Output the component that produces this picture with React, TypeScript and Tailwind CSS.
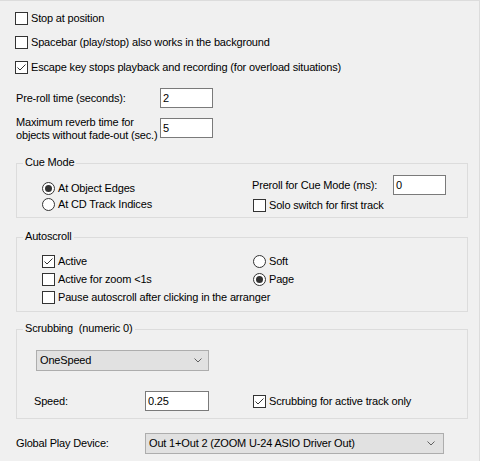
import type { PropsWithChildren } from 'react'

type ToggleProps = {
  label: string
  checked?: boolean
  className?: string
}

function CheckBox({ label, checked = false, className = '' }: ToggleProps) {
  return (
    <label className={`flex h-[15px] items-center gap-[3px] ${className}`}>
      <span className="flex h-[13px] w-[13px] shrink-0 items-center justify-center border border-[#333333] bg-white">
        {checked && (
          <svg width="11" height="11" viewBox="0 0 11 11" fill="none">
            <path d="M1.5 5.5 L4 8 L9.5 2.5" stroke="#333333" strokeWidth="1" />
          </svg>
        )}
      </span>
      <span className="whitespace-nowrap">{label}</span>
    </label>
  )
}

function Radio({ label, checked = false, className = '' }: ToggleProps) {
  return (
    <label className={`flex h-[15px] items-center gap-[3px] ${className}`}>
      <span className="flex h-[13px] w-[13px] shrink-0 items-center justify-center rounded-full border border-[#333333] bg-white">
        {checked && <span className="h-[7px] w-[7px] rounded-full bg-[#333333]" />}
      </span>
      <span className="whitespace-nowrap">{label}</span>
    </label>
  )
}

function TextBox({ value, className = '' }: { value: string; className?: string }) {
  return (
    <div className={`flex h-[20px] items-center border border-[#7a7a7a] bg-white pl-[2px] ${className}`}>
      {value}
    </div>
  )
}

function ComboBox({ value, className = '' }: { value: string; className?: string }) {
  return (
    <div className={`flex h-[21px] items-center justify-between border border-[#adadad] bg-[#e1e1e1] pl-[3px] pr-[6px] ${className}`}>
      <span className="whitespace-nowrap">{value}</span>
      <svg width="8" height="5" viewBox="0 0 8 5" fill="none">
        <path d="M0.5 0.5 L4 4 L7.5 0.5" stroke="#606060" strokeWidth="1" />
      </svg>
    </div>
  )
}

function Group({ title, className = '', children }: PropsWithChildren<{ title: string; className?: string }>) {
  return (
    <div className={`relative ml-[16px] w-[452px] border border-[#dcdcdc] ${className}`}>
      <span className="absolute -top-[8px] left-[6px] whitespace-pre bg-[#f0f0f0] px-[2px] leading-[13px]">
        {title}
      </span>
      {children}
    </div>
  )
}

export default function App() {
  return (
    <div className="h-[461px] w-[480px] overflow-hidden border-t border-r border-[#dcdcdc] bg-[#f0f0f0] font-['Liberation_Sans',Arial,sans-serif] text-[11px] leading-[13px] tracking-[-0.17px] text-black">
      {/* general playback switches */}
      <div className="flex flex-col pl-[15px] pt-[10px]">
        <CheckBox label="Stop at position" />
        <CheckBox className="mt-[9px]" label="Spacebar (play/stop) also works in the background" />
        <CheckBox className="mt-[10px]" checked label="Escape key stops playback and recording (for overload situations)" />
      </div>

      <div className="mt-[13px] flex items-center pl-[16px]">
        <span className="w-[144px] whitespace-nowrap">Pre-roll time (seconds):</span>
        <TextBox className="w-[53px]" value="2" />
      </div>

      <div className="mt-[8px] flex items-start pl-[16px]">
        <span className="w-[144px] whitespace-nowrap">
          Maximum reverb time for
          <br />
          objects without fade-out (sec.)
        </span>
        <TextBox className="mt-[2px] w-[53px]" value="5" />
      </div>

      <Group title="Cue Mode" className="mt-[21px] h-[55px]">
        <div className="flex">
          <div className="flex w-[235px] flex-col gap-[1px] pl-[25px] pt-[17px]">
            <Radio checked label="At Object Edges" />
            <Radio label="At CD Track Indices" />
          </div>
          <div className="flex flex-col pt-[11px]">
            <div className="flex items-center">
              <span className="w-[141px] whitespace-nowrap">Preroll for Cue Mode (ms):</span>
              <TextBox className="w-[53px]" value="0" />
            </div>
            <CheckBox className="ml-[1px] mt-[3px]" label="Solo switch for first track" />
          </div>
        </div>
      </Group>

      <Group title="Autoscroll" className="mt-[19px] h-[75px]">
        <div className="grid grid-cols-[211px_1fr] gap-y-[3px] pl-[25px] pt-[16px]">
          <CheckBox checked label="Active" />
          <Radio label="Soft" />
          <CheckBox label="Active for zoom <1s" />
          <Radio checked label="Page" />
          <CheckBox className="col-span-2" label="Pause autoscroll after clicking in the arranger" />
        </div>
      </Group>

      <Group title="Scrubbing  (numeric 0)" className="mt-[17px] h-[90px]">
        <ComboBox className="ml-[19px] mt-[20px] w-[173px]" value="OneSpeed" />
        <div className="mt-[20px] flex items-center pl-[17px]">
          <span className="w-[111px]">Speed:</span>
          <TextBox className="w-[64px]" value="0.25" />
          <CheckBox className="ml-[44px]" checked label="Scrubbing for active track only" />
        </div>
      </Group>

      <div className="mt-[14px] flex items-center pl-[16px]">
        <span className="w-[129px] whitespace-nowrap">Global Play Device:</span>
        <ComboBox className="w-[299px] pr-[8px]" value="Out 1+Out 2 (ZOOM U-24 ASIO Driver Out)" />
      </div>
    </div>
  )
}
